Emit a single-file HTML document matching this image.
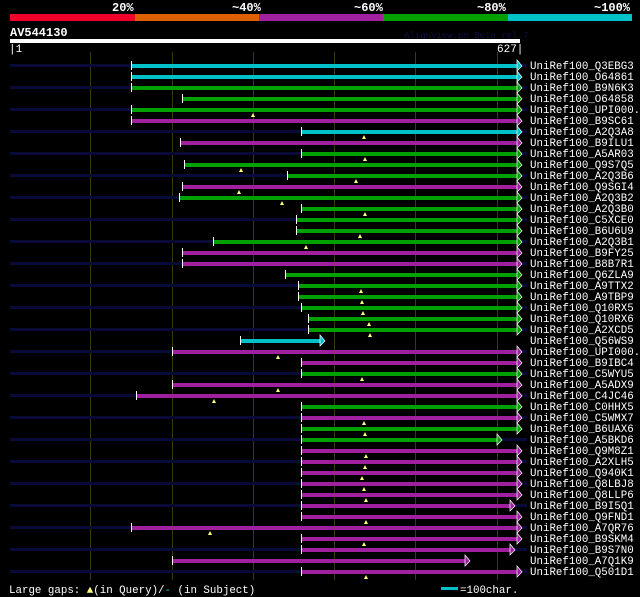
<!DOCTYPE html>
<html><head><meta charset="utf-8"><style>
html,body{margin:0;padding:0;background:#000;width:640px;height:597px;overflow:hidden}
svg{display:block}
text{font-family:"Liberation Mono","DejaVu Sans Mono",monospace;fill:#fff}
</style></head><body>
<svg id="s" width="640" height="597" xmlns="http://www.w3.org/2000/svg">
<g font-size="12" font-weight="bold">
<text x="112" y="11">20%</text><text x="232" y="11">~40%</text><text x="354" y="11">~60%</text><text x="477" y="11">~80%</text><text x="594" y="11">~100%</text>
</g>
<rect x="10" y="14" width="125" height="7" fill="#f0002a"/>
<rect x="135" y="14" width="124" height="7" fill="#e06000"/>
<rect x="259" y="14" width="124" height="7" fill="#a020a0"/>
<rect x="383" y="14" width="125" height="7" fill="#00a000"/>
<rect x="508" y="14" width="124" height="7" fill="#00c0c8"/>
<text x="10" y="36" font-size="12" font-weight="bold">AV544130</text>
<text x="404" y="38" font-size="9" style="fill:#101040">AlignView.pm Beta rel.7</text>
<rect x="10" y="39" width="510" height="4" fill="#fff"/>
<text x="9" y="52" font-size="11">|1</text>
<text x="497" y="52" font-size="11">627|</text>
<g id="grid"></g>
<g id="bars"></g>
<g font-size="10.8" id="lab">
<text x="530" y="69">UniRef100_Q3EBG3</text><text x="530" y="80">UniRef100_O64861</text><text x="530" y="91">UniRef100_B9N6K3</text><text x="530" y="102">UniRef100_O64858</text><text x="530" y="113">UniRef100_UPI000..</text><text x="530" y="124">UniRef100_B9SC61</text><text x="530" y="135">UniRef100_A2Q3A8</text><text x="530" y="146">UniRef100_B9ILU1</text><text x="530" y="157">UniRef100_A5AR03</text><text x="530" y="168">UniRef100_Q9S7Q5</text><text x="530" y="179">UniRef100_A2Q3B6</text><text x="530" y="190">UniRef100_Q9SGI4</text><text x="530" y="201">UniRef100_A2Q3B2</text><text x="530" y="212">UniRef100_A2Q3B0</text><text x="530" y="223">UniRef100_C5XCE0</text><text x="530" y="234">UniRef100_B6U6U9</text><text x="530" y="245">UniRef100_A2Q3B1</text><text x="530" y="256">UniRef100_B9FY25</text><text x="530" y="267">UniRef100_B8B7R1</text><text x="530" y="278">UniRef100_Q6ZLA9</text><text x="530" y="289">UniRef100_A9TTX2</text><text x="530" y="300">UniRef100_A9TBP9</text><text x="530" y="311">UniRef100_Q10RX5</text><text x="530" y="322">UniRef100_Q10RX6</text><text x="530" y="333">UniRef100_A2XCD5</text><text x="530" y="344">UniRef100_Q56WS9</text><text x="530" y="355">UniRef100_UPI000..</text><text x="530" y="366">UniRef100_B9IBC4</text><text x="530" y="377">UniRef100_C5WYU5</text><text x="530" y="388">UniRef100_A5ADX9</text><text x="530" y="399">UniRef100_C4JC46</text><text x="530" y="410">UniRef100_C0HHX5</text><text x="530" y="421">UniRef100_C5WMX7</text><text x="530" y="432">UniRef100_B6UAX6</text><text x="530" y="443">UniRef100_A5BKD6</text><text x="530" y="454">UniRef100_Q9M8Z1</text><text x="530" y="465">UniRef100_A2XLH5</text><text x="530" y="476">UniRef100_Q940K1</text><text x="530" y="487">UniRef100_Q8LBJ8</text><text x="530" y="498">UniRef100_Q8LLP6</text><text x="530" y="509">UniRef100_B9I5Q1</text><text x="530" y="520">UniRef100_Q9FND1</text><text x="530" y="531">UniRef100_A7QR76</text><text x="530" y="542">UniRef100_B9SKM4</text><text x="530" y="553">UniRef100_B9S7N0</text><text x="530" y="564">UniRef100_A7Q1K9</text><text x="530" y="575">UniRef100_Q501D1</text>
</g>
<text x="9" y="593" font-size="10.8">Large gaps: <tspan style="fill:#ff8">▲</tspan>(in Query)/<tspan style="fill:#0cc">-</tspan> (in Subject)</text>
<rect x="441" y="587" width="17" height="3" fill="#00c0c8"/>
<text x="460" y="593" font-size="10.8">=100char.</text>
</svg>
<script>
var S="http://www.w3.org/2000/svg";
function el(p,t,a){var e=document.createElementNS(S,t);for(var k in a)e.setAttribute(k,a[k]);document.getElementById(p).appendChild(e);}
[90,172,253,334,415,497].forEach(function(x){el("grid","rect",{x:x,y:52,width:1,height:528,fill:"#3a3a10"});});
var C={c:"#00c0c8",g:"#00a000",m:"#a020a0"};
var R=[[131,517,"c"],[131,517,"c"],[131,517,"g"],[182,517,"g"],[131,517,"g",253],[131,517,"m"],[301,517,"c",364],[180,517,"m"],[301,517,"g",365],[184,517,"g",241],[287,517,"g",356],[182,517,"m",239],[179,517,"g",282],[301,517,"g",365],[296,517,"g"],[296,517,"g",360],[213,517,"g",306],[182,517,"m"],[182,517,"m"],[285,517,"g"],[298,517,"g",361],[298,517,"g",362],[301,517,"g",363],[308,517,"g",369],[308,517,"g",370],[240,320,"c"],[172,517,"m",278],[301,517,"m"],[301,517,"g",362],[172,517,"m",278],[136,517,"m",214],[301,517,"g"],[301,517,"m",364],[301,517,"g",365],[301,497,"g"],[301,517,"m",366],[301,517,"m",365],[301,517,"m",362],[301,517,"m",364],[301,517,"m",366],[301,510,"m"],[301,517,"m",366],[131,517,"m",210],[301,517,"m",364],[301,510,"m"],[172,465,"m"],[301,517,"m",366]];
R.forEach(function(r,i){var y=65+i*11;
 if(i%2==0)el("bars","rect",{x:10,y:y-1,width:517,height:3,fill:"#0a0a3a"});
 el("bars","rect",{x:r[0],y:y-1,width:r[1]-r[0],height:4,fill:C[r[2]]});
 el("bars","rect",{x:r[0],y:y-4,width:1,height:9,fill:"#fff"});
 el("bars","polygon",{points:r[1]+","+(y-5)+" "+(r[1]+5)+","+(y+1)+" "+r[1]+","+(y+6),fill:C[r[2]],stroke:"#fff","stroke-width":"0.7"});
 if(r[3])el("bars","polygon",{points:r[3]+","+(y+4)+" "+(r[3]+2)+","+(y+8)+" "+(r[3]-2)+","+(y+8),fill:"#ffff80"});
});
</script>
</body></html>
